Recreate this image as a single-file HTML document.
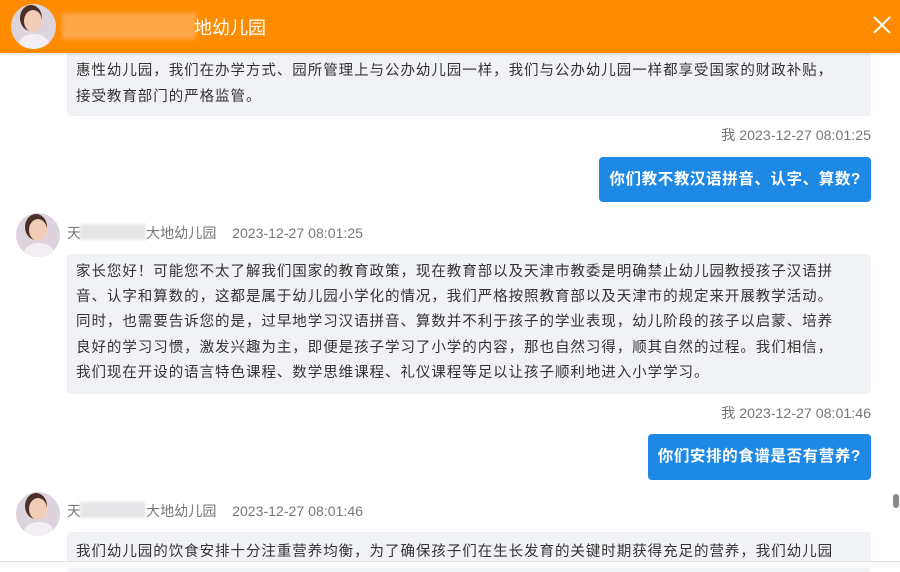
<!DOCTYPE html>
<html><head><meta charset="utf-8"><style>
*{margin:0;padding:0;box-sizing:border-box}
body{width:900px;height:568px;overflow:hidden;background:#fff;font-family:"Liberation Sans","Noto Sans CJK SC",sans-serif;position:relative;color:#333}
.hdr{position:absolute;left:0;top:0;width:900px;height:53px;background:#ff8c00;box-shadow:0 1px 3px rgba(0,0,0,.15);z-index:2}
.av{position:absolute;width:44px;height:44px;border-radius:50%;overflow:hidden;background:#ddd3dc}
.av i{position:absolute;left:13px;top:6px;width:18px;height:22px;border-radius:50%;background:#f1cdb8;box-shadow:-2px -3px 0 2px #4a3028}
.av b{position:absolute;left:8px;top:30px;width:30px;height:20px;border-radius:50% 50% 0 0;background:#f2eef3}
.blur{position:absolute;background:#e6e6e8;filter:blur(1.5px)}
.b{position:absolute;left:67px;width:804px;background:#f0f2f5;border-radius:4px;font-size:14.5px;letter-spacing:0.95px;line-height:25.2px;padding:0 9px;color:#333;white-space:nowrap;overflow:hidden}
.ts{position:absolute;font-size:14.2px;color:#777}
.me{position:absolute;right:29px;background:#1e88e5;color:#fff;border-radius:4px;font-size:15.5px;letter-spacing:0.6px;font-weight:bold;padding:0 10px;line-height:46px}
.nm{position:absolute;left:67px;font-size:14.1px;color:#777}
</style></head><body>
<div class="b" style="top:40px;height:76px;padding-top:18px;line-height:26px">惠性幼儿园，我们在办学方式、园所管理上与公办幼儿园一样，我们与公办幼儿园一样都享受国家的财政补贴，<br>接受教育部门的严格监管。</div>
<div class="hdr">
<div class="av" style="left:11px;top:4px;width:45px;height:45px"><i></i><b></b></div>
<div style="position:absolute;left:62px;top:13px;width:134px;height:26px;background:#ffa84a;filter:blur(2px)"></div>
<div style="position:absolute;left:194px;top:14px;font-size:18px;color:#fff">地幼儿园</div>
<svg style="position:absolute;left:873px;top:16px" width="18" height="18" viewBox="0 0 18 18"><path d="M1 1L17 17M17 1L1 17" stroke="#fff" stroke-width="2"/></svg>
</div>
<div class="ts" style="right:29px;top:125px">我 2023-12-27 08:01:25</div>
<div class="me" style="top:157px;height:45px;line-height:45px">你们教不教汉语拼音、认字、算数?</div>
<div class="av" style="left:16px;top:213px"><i></i><b></b></div>
<div class="nm" style="top:223px">天</div>
<div class="blur" style="left:80px;top:224px;width:66px;height:16px"></div>
<div class="nm" style="left:146px;top:223px">大地幼儿园 &nbsp;&nbsp;&nbsp;2023-12-27 08:01:25</div>
<div class="b" style="top:254px;height:140px;padding-top:6px">家长您好！可能您不太了解我们国家的教育政策，现在教育部以及天津市教委是明确禁止幼儿园教授孩子汉语拼<br>音、认字和算数的，这都是属于幼儿园小学化的情况，我们严格按照教育部以及天津市的规定来开展教学活动。<br>同时，也需要告诉您的是，过早地学习汉语拼音、算数并不利于孩子的学业表现，幼儿阶段的孩子以启蒙、培养<br>良好的学习习惯，激发兴趣为主，即便是孩子学习了小学的内容，那也自然习得，顺其自然的过程。我们相信，<br>我们现在开设的语言特色课程、数学思维课程、礼仪课程等足以让孩子顺利地进入小学学习。</div>
<div class="ts" style="right:29px;top:403px">我 2023-12-27 08:01:46</div>
<div class="me" style="top:434px;height:46px">你们安排的食谱是否有营养?</div>
<div class="av" style="left:16px;top:492px"><i></i><b></b></div>
<div class="nm" style="top:501px">天</div>
<div class="blur" style="left:80px;top:502px;width:66px;height:16px"></div>
<div class="nm" style="left:146px;top:501px">大地幼儿园 &nbsp;&nbsp;&nbsp;2023-12-27 08:01:46</div>
<div class="b" style="top:532px;height:40px;padding-top:8px">我们幼儿园的饮食安排十分注重营养均衡，为了确保孩子们在生长发育的关键时期获得充足的营养，我们幼儿园</div>
<div style="position:absolute;left:0;top:561px;width:900px;height:7px;background:#fafafa;border-top:1px solid #e4e4e4"></div>
<div style="position:absolute;left:893px;top:494px;width:6px;height:14px;border-radius:3px;background:#888"></div>
</body></html>
